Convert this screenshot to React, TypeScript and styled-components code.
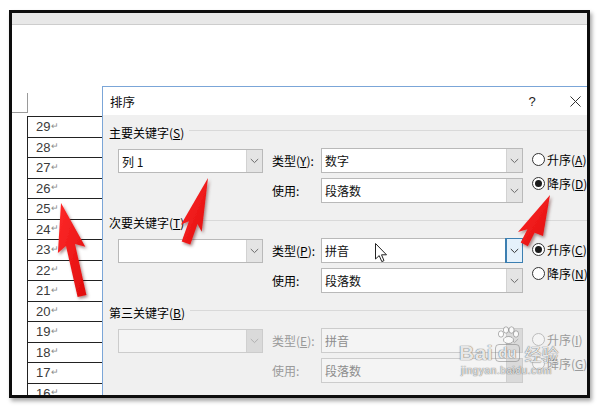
import React from 'react';
import styled, { createGlobalStyle } from 'styled-components';

const GlobalStyle = createGlobalStyle`
  html, body { margin: 0; padding: 0; background: #fff; }
  body {
    width: 600px; height: 409px; overflow: hidden;
    font-family: "Noto Sans CJK SC", "Noto Sans", sans-serif;
  }
`;

const Page = styled.div`
  position: relative;
  width: 600px;
  height: 409px;
  box-sizing: border-box;
  padding: 10px 0 0 9px;
  background: #fff;
`;

const Frame = styled.div`
  position: relative;
  width: 581px;
  height: 388px;
  box-sizing: border-box;
  border: 3px solid #0d0d0d;
  box-shadow: 2px 3px 4px rgba(0, 0, 0, 0.35);
  overflow: hidden;
  background: #fff;
  display: flex;
  flex-direction: column;
`;

const Ribbon = styled.div`
  height: 12px;
  box-sizing: border-box;
  background: #e8e8e8;
  border-bottom: 1px solid #cdcdcd;
  flex: none;
`;

const DocArea = styled.div`
  flex: 1;
  padding: 68px 0 0 15px;
  display: flex;
  flex-direction: column;
`;

const CropMark = styled.div`
  margin-left: -15px;
  width: 16px;
  height: 20px;
  box-sizing: border-box;
  border-right: 1px solid #9a9a9a;
  border-bottom: 1px solid #9a9a9a;
`;

const DocTable = styled.div`
  margin-top: 3px;
  width: 110px;
  border-top: 1px solid #222;
  border-left: 1px solid #222;
  display: flex;
  flex-direction: column;
`;

const Cell = styled.div`
  height: 20.5px;
  flex: none;
  box-sizing: border-box;
  border-bottom: 1px solid #222;
  padding-left: 8px;
  display: flex;
  align-items: center;
  font-family: "Liberation Sans", Arial, sans-serif;
  font-size: 13px;
  color: #3a3a3a;
`;

const ReturnMark = styled.span`
  font-size: 9px;
  color: #8a8a8a;
  margin-left: 1px;
  position: relative;
  top: -1px;
`;

const Dialog = styled.div`
  position: absolute;
  left: 90px;
  top: 73px;
  width: 497px;
  height: 340px;
  box-sizing: border-box;
  border: 1px solid #7ba6d8;
  background: #f0f0f0;
  display: flex;
  flex-direction: column;
  font-size: 12px;
  color: #000;
`;

const TitleBar = styled.div`
  height: 28px;
  background: #fff;
  display: flex;
  align-items: center;
  flex: none;
`;

const Title = styled.div`
  padding-left: 7px;
  font-size: 12.5px;
  color: #111;
`;

const HelpButton = styled.div`
  margin-left: auto;
  width: 40px;
  text-align: center;
  font-family: "Liberation Sans", Arial, sans-serif;
  font-size: 13px;
  color: #222;
`;

const CloseButton = styled.div`
  width: 46px;
  height: 28px;
  display: flex;
  align-items: center;
  justify-content: center;
`;

const Body = styled.div`
  padding: 8px 0 0 6px;
  display: flex;
  flex-direction: column;
`;

const Group = styled.div`
  display: flex;
  flex-direction: column;
`;

const GroupHeader = styled.div`
  height: 18px;
  display: flex;
  align-items: center;
  gap: 5px;
  white-space: nowrap;
`;

const GroupLine = styled.div`
  flex: 1;
  height: 1px;
  background: #d9d9d9;
  margin-top: -3px;
`;

const GroupBody = styled.div`
  display: grid;
  grid-template-columns: 145px 58px 202px 1fr;
  grid-template-rows: 25px 25px;
  row-gap: 5px;
  margin: 7px 0 10px 9px;
`;

const FieldLabel = styled.div<{ $row: number; $disabled?: boolean }>`
  grid-column: 2;
  grid-row: ${(p) => p.$row};
  align-self: center;
  padding-left: 9px;
  white-space: nowrap;
  color: ${(p) => (p.$disabled ? '#9a9a9a' : '#000')};
`;

const ComboBox = styled.div<{ $disabled?: boolean; $col: number; $row: number; $key?: boolean }>`
  grid-column: ${(p) => p.$col};
  grid-row: ${(p) => p.$row};
  height: ${(p) => (p.$key ? '24px' : '25px')};
  margin-top: ${(p) => (p.$key ? '1px' : '0')};
  box-sizing: border-box;
  border: 1px solid ${(p) => (p.$disabled ? '#cccccc' : '#b9b9b9')};
  background: ${(p) => (p.$disabled ? '#f4f4f4' : '#fff')};
  display: flex;
  align-items: stretch;
`;

const ComboText = styled.div<{ $disabled?: boolean }>`
  flex: 1;
  padding-left: 3px;
  display: flex;
  align-items: center;
  color: ${(p) => (p.$disabled ? '#8d8d8d' : '#111')};
`;

const DropButton = styled.div<{ $disabled?: boolean; $active?: boolean }>`
  width: 16px;
  box-sizing: border-box;
  background: ${(p) => (p.$active ? '#e5f1fb' : p.$disabled ? '#dadada' : '#e4e4e4')};
  border-left: 1px solid ${(p) => (p.$active ? '#3c7fb1' : p.$disabled ? '#d0d0d0' : '#d2d2d2')};
  outline: ${(p) => (p.$active ? '1px solid #3c7fb1' : 'none')};
  display: flex;
  align-items: center;
  justify-content: center;
`;

const RadioColumn = styled.div`
  grid-column: 4;
  grid-row: 1 / span 2;
  padding-left: 9px;
  margin-top: -1px;
  display: flex;
  flex-direction: column;
`;

const RadioRow = styled.div<{ $disabled?: boolean }>`
  height: 24px;
  display: flex;
  align-items: center;
  gap: 2px;
  white-space: nowrap;
  color: ${(p) => (p.$disabled ? '#9a9a9a' : '#000')};
`;

const RadioCircle = styled.span<{ $checked?: boolean; $disabled?: boolean }>`
  width: 13px;
  height: 13px;
  flex: none;
  box-sizing: border-box;
  border-radius: 50%;
  border: 1px solid ${(p) => (p.$disabled ? '#bcbcbc' : '#333')};
  background: ${(p) => (p.$disabled ? '#f4f4f4' : '#fff')};
  display: flex;
  align-items: center;
  justify-content: center;
  &::after {
    content: '';
    width: 7px;
    height: 7px;
    border-radius: 50%;
    background: #1a1a1a;
    display: ${(p) => (p.$checked ? 'block' : 'none')};
  }
`;

const U = styled.span`
  text-decoration: underline;
  text-underline-offset: 1px;
`;

const Overlay = styled.svg`
  position: absolute;
  left: 0;
  top: 0;
  width: 600px;
  height: 409px;
  pointer-events: none;
`;

const Cursor = styled.svg`
  position: absolute;
  left: 375px;
  top: 243px;
  width: 13px;
  height: 20px;
  pointer-events: none;
`;

const Watermark = styled.div`
  position: absolute;
  left: 459px;
  top: 342px;
  display: flex;
  flex-direction: column;
  align-items: flex-start;
  pointer-events: none;
  color: rgba(255, 255, 255, 0.85);
  text-shadow: 0 0 1px rgba(90, 90, 90, 0.8), 0 0 1px rgba(90, 90, 90, 0.8);
`;

const WmRow = styled.div`
  display: flex;
  align-items: flex-end;
  gap: 2px;
`;

const WmBai = styled.span`
  font-family: "Liberation Sans", Arial, sans-serif;
  font-weight: bold;
  font-size: 21px;
  line-height: 22px;
  letter-spacing: 0.5px;
`;

const WmDu = styled.span`
  position: relative;
  font-family: "Liberation Sans", Arial, sans-serif;
  font-weight: bold;
  font-size: 15px;
  line-height: 16px;
  padding: 0 2px;
  border: 1px solid rgba(120, 120, 120, 0.5);
  border-radius: 4px;
  margin-bottom: 2px;
`;

const WmPaw = styled.svg`
  position: absolute;
  left: 0px;
  top: -19px;
  width: 24px;
  height: 18px;
`;

const WmJy = styled.span`
  font-size: 17px;
  line-height: 20px;
  margin-left: 3px;
`;

const WmUrl = styled.span`
  font-family: "Liberation Sans", Arial, sans-serif;
  font-size: 10px;
  letter-spacing: 0.6px;
  margin-top: 1px;
  margin-left: 2px;
`;

const Chevron = ({ color = '#6a6a6a' }: { color?: string }) => (
  <svg width="9" height="6" viewBox="0 0 9 6">
    <path d="M0.8 1 L4.5 4.6 L8.2 1" fill="none" stroke={color} strokeWidth="1" />
  </svg>
);

type Radio = { text: string; key: string; checked?: boolean };
type GroupData = {
  title: string;
  titleKey: string;
  keyValue: string;
  typeLabel: string;
  typeKey: string;
  typeValue: string;
  useValue: string;
  radios: Radio[];
  disabled?: boolean;
  active?: boolean;
};

const groups: GroupData[] = [
  {
    title: '主要关键字',
    titleKey: 'S',
    keyValue: '列 1',
    typeLabel: '类型',
    typeKey: 'Y',
    typeValue: '数字',
    useValue: '段落数',
    radios: [
      { text: '升序', key: 'A' },
      { text: '降序', key: 'D', checked: true },
    ],
  },
  {
    title: '次要关键字',
    titleKey: 'T',
    keyValue: '',
    typeLabel: '类型',
    typeKey: 'P',
    typeValue: '拼音',
    useValue: '段落数',
    active: true,
    radios: [
      { text: '升序', key: 'C', checked: true },
      { text: '降序', key: 'N' },
    ],
  },
  {
    title: '第三关键字',
    titleKey: 'B',
    keyValue: '',
    typeLabel: '类型',
    typeKey: 'E',
    typeValue: '拼音',
    useValue: '段落数',
    disabled: true,
    radios: [
      { text: '升序', key: 'I' },
      { text: '降序', key: 'G' },
    ],
  },
];

const rows = [29, 28, 27, 26, 25, 24, 23, 22, 21, 20, 19, 18, 17, 16];

const SortGroup = ({ g }: { g: GroupData }) => {
  const dis = g.disabled;
  const chev = dis ? '#b0b0b0' : '#6a6a6a';
  return (
    <Group>
      <GroupHeader>
        <span>
          {g.title}(<U>{g.titleKey}</U>)
        </span>
        <GroupLine />
      </GroupHeader>
      <GroupBody>
        <ComboBox $col={1} $row={1} $key $disabled={dis}>
          <ComboText $disabled={dis}>{g.keyValue}</ComboText>
          <DropButton $disabled={dis}>
            <Chevron color={chev} />
          </DropButton>
        </ComboBox>
        <FieldLabel $row={1} $disabled={dis}>
          {g.typeLabel}(<U>{g.typeKey}</U>):
        </FieldLabel>
        <ComboBox $col={3} $row={1} $disabled={dis}>
          <ComboText $disabled={dis}>{g.typeValue}</ComboText>
          <DropButton $disabled={dis} $active={g.active}>
            <Chevron color={g.active ? '#333' : chev} />
          </DropButton>
        </ComboBox>
        <FieldLabel $row={2} $disabled={dis}>
          使用:
        </FieldLabel>
        <ComboBox $col={3} $row={2} $disabled={dis}>
          <ComboText $disabled={dis}>{g.useValue}</ComboText>
          <DropButton $disabled={dis}>
            <Chevron color={chev} />
          </DropButton>
        </ComboBox>
        <RadioColumn>
          {g.radios.map((r) => (
            <RadioRow key={r.key} $disabled={dis}>
              <RadioCircle $checked={r.checked} $disabled={dis} />
              <span>
                {r.text}(<U>{r.key}</U>)
              </span>
            </RadioRow>
          ))}
        </RadioColumn>
      </GroupBody>
    </Group>
  );
};

export default function App() {
  return (
    <>
      <GlobalStyle />
      <Page>
        <Frame>
          <Ribbon />
          <DocArea>
            <CropMark />
            <DocTable>
              {rows.map((n) => (
                <Cell key={n}>
                  {n}
                  <ReturnMark>↵</ReturnMark>
                </Cell>
              ))}
            </DocTable>
          </DocArea>
          <Dialog>
            <TitleBar>
              <Title>排序</Title>
              <HelpButton>?</HelpButton>
              <CloseButton>
                <svg width="11" height="11" viewBox="0 0 11 11">
                  <path d="M0.5 0.5 L10.5 10.5 M10.5 0.5 L0.5 10.5" stroke="#333" strokeWidth="1" />
                </svg>
              </CloseButton>
            </TitleBar>
            <Body>
              {groups.map((g) => (
                <SortGroup key={g.titleKey} g={g} />
              ))}
            </Body>
          </Dialog>
        </Frame>
        <Cursor viewBox="0 0 13 20">
          <path
            d="M0.5 0.5 L0.5 16 L4.2 12.6 L6.8 18.6 L9 17.6 L6.5 11.8 L11.5 11.8 Z"
            fill="#fff"
            stroke="#222"
            strokeWidth="1"
            strokeLinejoin="round"
          />
        </Cursor>
        <Overlay viewBox="0 0 600 409">
          <defs>
            <filter id="sh" x="-50%" y="-50%" width="200%" height="200%">
              <feDropShadow dx="1.5" dy="2" stdDeviation="1.5" floodColor="#400" floodOpacity="0.45" />
            </filter>
            <linearGradient id="rg" x1="0" y1="0" x2="1" y2="1">
              <stop offset="0" stopColor="#ff2a2a" />
              <stop offset="1" stopColor="#e00c0c" />
            </linearGradient>
          </defs>
          <g fill="url(#rg)" filter="url(#sh)" strokeLinejoin="round">
            <polygon points="61,203 85.3,246.7 75,244 86.4,295 77.6,297 66,246 57.9,252.9" />
            <polygon points="208,178 201.7,231.8 197.5,224 190.3,244.4 181.7,241.6 188.9,221.2 180.9,224.8" />
            <polygon points="550,195 543,236 534.6,232.8 527.9,246.2 520.7,242.6 527.4,229.2 518,232" />
          </g>
        </Overlay>
        <Watermark>
          <WmRow>
            <WmBai>Bai</WmBai>
            <WmDu>
              <WmPaw viewBox="0 0 24 18">
                <g fill="rgba(255,255,255,0.85)" stroke="rgba(100,100,100,0.6)" strokeWidth="0.8">
                  <ellipse cx="5" cy="8" rx="2.6" ry="3.2" />
                  <ellipse cx="10" cy="4" rx="2.6" ry="3.2" />
                  <ellipse cx="15.5" cy="4" rx="2.6" ry="3.2" />
                  <ellipse cx="20" cy="8" rx="2.6" ry="3.2" />
                  <ellipse cx="12.5" cy="14" rx="5" ry="3.5" />
                </g>
              </WmPaw>
              du
            </WmDu>
            <WmJy>经验</WmJy>
          </WmRow>
          <WmUrl>jingyan.baidu.com</WmUrl>
        </Watermark>
      </Page>
    </>
  );
}
